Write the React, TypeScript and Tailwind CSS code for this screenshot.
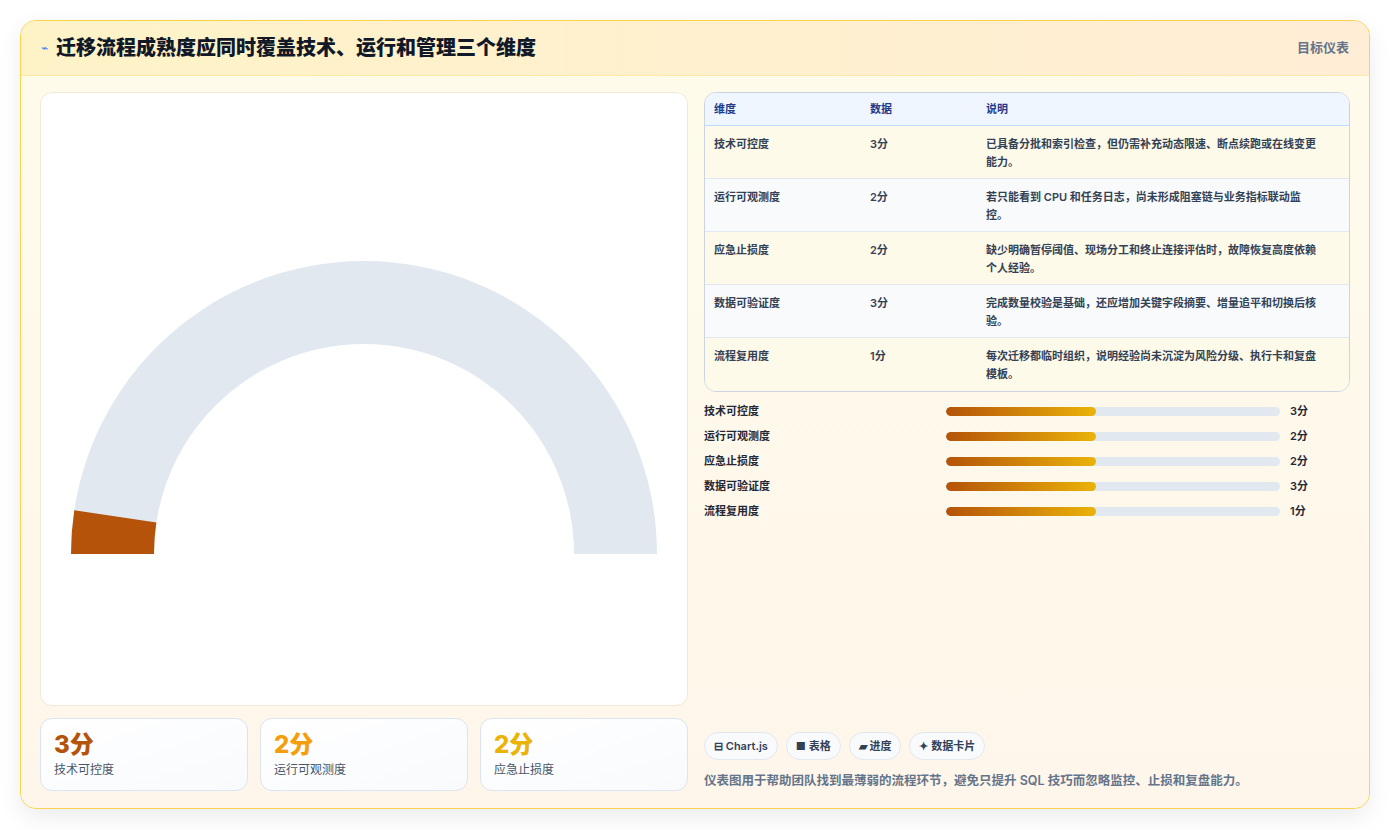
import React from "react";

const rows = [
  { name: "技术可控度", value: "3分", desc: "已具备分批和索引检查，但仍需补充动态限速、断点续跑或在线变更能力。" },
  { name: "运行可观测度", value: "2分", desc: "若只能看到 CPU 和任务日志，尚未形成阻塞链与业务指标联动监控。" },
  { name: "应急止损度", value: "2分", desc: "缺少明确暂停阈值、现场分工和终止连接评估时，故障恢复高度依赖个人经验。" },
  { name: "数据可验证度", value: "3分", desc: "完成数量校验是基础，还应增加关键字段摘要、增量追平和切换后核验。" },
  { name: "流程复用度", value: "1分", desc: "每次迁移都临时组织，说明经验尚未沉淀为风险分级、执行卡和复盘模板。" },
];

const cards = [
  { value: "3分", label: "技术可控度", color: "text-[#b45309]" },
  { value: "2分", label: "运行可观测度", color: "text-[#f59e0b]" },
  { value: "2分", label: "应急止损度", color: "text-[#eab308]" },
];

function Gauge() {
  const cx = 323, cy = 460, R = 293, r = 210;
  const a = (8.6 * Math.PI) / 180;
  const p = (rad: number, ang: number) => `${cx - rad * Math.cos(ang)} ${cy - rad * Math.sin(ang)}`;
  return (
    <svg viewBox="0 0 646 610" className="w-full h-full">
      <path d={`M ${cx - R} ${cy} A ${R} ${R} 0 0 1 ${cx + R} ${cy} L ${cx + r} ${cy} A ${r} ${r} 0 0 0 ${cx - r} ${cy} Z`} fill="#e2e8f0" />
      <path d={`M ${cx - R} ${cy} A ${R} ${R} 0 0 1 ${p(R, a)} L ${p(r, a)} A ${r} ${r} 0 0 0 ${cx - r} ${cy} Z`} fill="#b45309" />
    </svg>
  );
}

export default function App() {
  return (
    <div className="w-[1390px] h-[830px] bg-white p-5" style={{ fontFamily: "Inter, 'Noto Sans CJK SC', sans-serif" }}>
      <div className="h-[789px] rounded-2xl border border-[#fcd34d] bg-[#fef7ec] shadow-[0_8px_24px_rgba(0,0,0,0.08)] overflow-hidden flex flex-col">
        <div className="h-[55px] shrink-0 flex items-center justify-between px-5 bg-gradient-to-r from-[#fef3c7] to-[#ffedd5] border-b border-[#fde68a]/60">
          <div className="flex items-center gap-2">
            <span className="text-[#3b82f6] text-xs">⌁</span>
            <h1 className="text-[20px] font-extrabold text-[#111827]">迁移流程成熟度应同时覆盖技术、运行和管理三个维度</h1>
          </div>
          <span className="text-[13px] font-semibold text-[#64748b]">目标仪表</span>
        </div>
        <div className="flex-1 flex gap-4 pl-[19px] pr-[19px] pt-4 pb-[17px] bg-gradient-to-b from-[#fffbeb] to-[#fef6ea]">
          <div className="w-[648px] flex flex-col gap-3">
            <div className="flex-1 bg-white rounded-xl border border-[#f1e9d8]">
              <Gauge />
            </div>
            <div className="grid grid-cols-3 gap-3">
              {cards.map((c) => (
                <div key={c.label} className="h-[73px] rounded-xl border border-[#dbe4f0] bg-gradient-to-br from-white to-[#f8fafc] px-[13px] pt-[10px]">
                  <div className={`text-[24px] font-extrabold leading-8 ${c.color}`}>{c.value}</div>
                  <div className="text-[12px] text-[#475569]">{c.label}</div>
                </div>
              ))}
            </div>
          </div>
          <div className="flex-1 flex flex-col">
            <div className="rounded-xl border border-[#cbd5e1] overflow-hidden">
              <div className="grid grid-cols-[156px_116px_1fr] bg-[#eff6ff] h-[33px] items-center px-[9px] text-[11px] font-semibold text-[#1e3a8a] border-b border-[#bfdbfe]">
                <span>维度</span><span>数据</span><span>说明</span>
              </div>
              {rows.map((r, i) => (
                <div key={r.name} className={`grid grid-cols-[156px_116px_1fr] h-[53px] px-[9px] pt-[9px] text-[11px] font-semibold text-[#334155] leading-[18px] ${i % 2 ? "bg-[#f8fafc]" : "bg-[#fefae9]"} ${i < 4 ? "border-b border-[#e2e8f0]" : ""}`}>
                  <span>{r.name}</span><span>{r.value}</span><span className="pr-5">{r.desc}</span>
                </div>
              ))}
            </div>
            <div className="mt-[10px] flex flex-col gap-[7px]">
              {rows.map((r) => (
                <div key={r.name} className="flex items-center h-[18px] text-[11px] font-semibold text-[#1f2937]">
                  <span className="w-[242px]">{r.name}</span>
                  <div className="w-[334px] h-[9px] rounded-full bg-[#e2e8f0] overflow-hidden">
                    <div className="h-full rounded-full bg-gradient-to-r from-[#b45309] to-[#eab308]" style={{ width: "45%" }} />
                  </div>
                  <span className="ml-[10px]">{r.value}</span>
                </div>
              ))}
            </div>
            <div className="mt-auto flex flex-col gap-[12px]">
              <div className="flex gap-2">
                {["⊟ Chart.js", "■ 表格", "▰ 进度", "✦ 数据卡片"].map((t) => (
                  <span key={t} className="h-[28px] px-[9px] flex items-center rounded-full border border-[#e2e8f0] bg-[#f8fafc] text-[11px] font-semibold text-[#334155]">{t}</span>
                ))}
              </div>
              <p className="text-[12.5px] font-semibold text-[#64748b] pb-0">仪表图用于帮助团队找到最薄弱的流程环节，避免只提升 SQL 技巧而忽略监控、止损和复盘能力。</p>
            </div>
          </div>
        </div>
      </div>
    </div>
  );
}
